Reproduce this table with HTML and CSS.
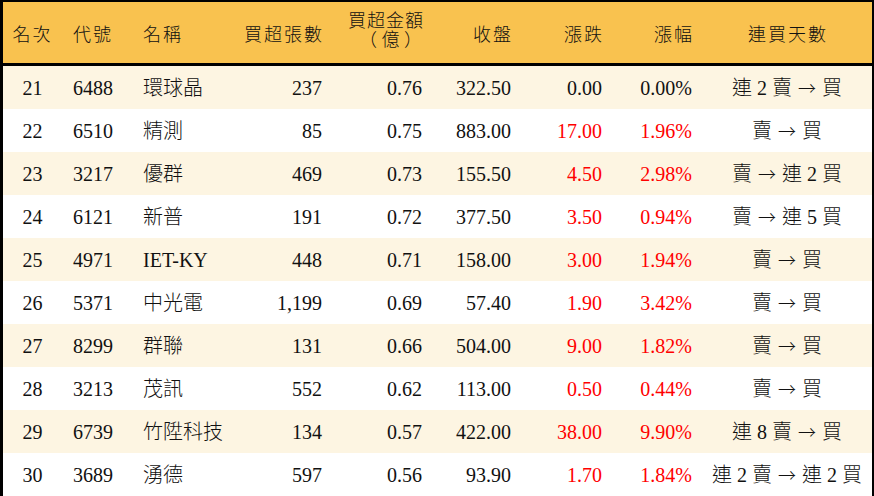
FILE: index.html
```html
<!DOCTYPE html>
<html lang="zh-Hant">
<head>
<meta charset="utf-8">
<link rel="stylesheet" href="styles.css">
</head>
<body>
<table class="board">
  <colgroup>
    <col class="c1"><col class="c2"><col class="c3"><col class="c4"><col class="c5"><col class="c6"><col class="c7"><col class="c8"><col class="c9">
  </colgroup>
  <thead>
    <tr>
      <th class="ctr">名次</th>
      <th class="lft">代號</th>
      <th class="lft">名稱</th>
      <th class="rgt">買超張數</th>
      <th class="rgt two">買超金額<br><span class="paren">（&nbsp;億&nbsp;）</span></th>
      <th class="rgt">收盤</th>
      <th class="rgt">漲跌</th>
      <th class="rgt">漲幅</th>
      <th class="ctr">連買天數</th>
    </tr>
  </thead>
  <tbody>
    <tr><td class="ctr">21</td><td class="lft">6488</td><td class="lft">環球晶</td><td class="rgt">237</td><td class="rgt">0.76</td><td class="rgt">322.50</td><td class="rgt">0.00</td><td class="rgt">0.00%</td><td class="ctr days">連 2 賣 <span class="arrow">→</span> 買</td></tr>
    <tr><td class="ctr">22</td><td class="lft">6510</td><td class="lft">精測</td><td class="rgt">85</td><td class="rgt">0.75</td><td class="rgt">883.00</td><td class="rgt up">17.00</td><td class="rgt up">1.96%</td><td class="ctr days">賣 <span class="arrow">→</span> 買</td></tr>
    <tr><td class="ctr">23</td><td class="lft">3217</td><td class="lft">優群</td><td class="rgt">469</td><td class="rgt">0.73</td><td class="rgt">155.50</td><td class="rgt up">4.50</td><td class="rgt up">2.98%</td><td class="ctr days">賣 <span class="arrow">→</span> 連 2 買</td></tr>
    <tr><td class="ctr">24</td><td class="lft">6121</td><td class="lft">新普</td><td class="rgt">191</td><td class="rgt">0.72</td><td class="rgt">377.50</td><td class="rgt up">3.50</td><td class="rgt up">0.94%</td><td class="ctr days">賣 <span class="arrow">→</span> 連 5 買</td></tr>
    <tr><td class="ctr">25</td><td class="lft">4971</td><td class="lft">IET-KY</td><td class="rgt">448</td><td class="rgt">0.71</td><td class="rgt">158.00</td><td class="rgt up">3.00</td><td class="rgt up">1.94%</td><td class="ctr days">賣 <span class="arrow">→</span> 買</td></tr>
    <tr><td class="ctr">26</td><td class="lft">5371</td><td class="lft">中光電</td><td class="rgt">1,199</td><td class="rgt">0.69</td><td class="rgt">57.40</td><td class="rgt up">1.90</td><td class="rgt up">3.42%</td><td class="ctr days">賣 <span class="arrow">→</span> 買</td></tr>
    <tr><td class="ctr">27</td><td class="lft">8299</td><td class="lft">群聯</td><td class="rgt">131</td><td class="rgt">0.66</td><td class="rgt">504.00</td><td class="rgt up">9.00</td><td class="rgt up">1.82%</td><td class="ctr days">賣 <span class="arrow">→</span> 買</td></tr>
    <tr><td class="ctr">28</td><td class="lft">3213</td><td class="lft">茂訊</td><td class="rgt">552</td><td class="rgt">0.62</td><td class="rgt">113.00</td><td class="rgt up">0.50</td><td class="rgt up">0.44%</td><td class="ctr days">賣 <span class="arrow">→</span> 買</td></tr>
    <tr><td class="ctr">29</td><td class="lft">6739</td><td class="lft">竹陞科技</td><td class="rgt">134</td><td class="rgt">0.57</td><td class="rgt">422.00</td><td class="rgt up">38.00</td><td class="rgt up">9.90%</td><td class="ctr days">連 8 賣 <span class="arrow">→</span> 買</td></tr>
    <tr><td class="ctr">30</td><td class="lft">3689</td><td class="lft">湧德</td><td class="rgt">597</td><td class="rgt">0.56</td><td class="rgt">93.90</td><td class="rgt up">1.70</td><td class="rgt up">1.84%</td><td class="ctr days">連 2 賣 <span class="arrow">→</span> 連 2 買</td></tr>
  </tbody>
</table>
</body>
</html>
```

FILE: styles.css
```css
html, body {
  margin: 0;
  padding: 0;
  background: #ffffff;
}

.board {
  width: 874px;
  box-sizing: border-box;
  border-collapse: separate;
  border-spacing: 0;
  table-layout: fixed;
  border-style: solid;
  border-color: #000;
  border-width: 2px 2px 4px 3px;
  font-family: "Liberation Serif", "Noto Sans CJK TC", serif;
  font-weight: 300;
  font-size: 20px;
  color: #111;
}

.c1 { width: 59px; }
.c2 { width: 71px; }
.c3 { width: 97px; }
.c4 { width: 102px; }
.c5 { width: 100px; }
.c6 { width: 89px; }
.c7 { width: 91px; }
.c8 { width: 90px; }
.c9 { width: 170px; }

th, td {
  padding: 0;
  white-space: nowrap;
  vertical-align: middle;
}

thead th {
  background: #f9c24f;
  height: 57px;
  font-weight: 300;
  font-size: 18px;
  border-bottom: 3px solid #000;
  letter-spacing: 2px;
}

thead th.two {
  line-height: 19px;
  padding-bottom: 4px;
  padding-right: 10px;
  letter-spacing: 1px;
}

.paren {
  letter-spacing: 0;
  padding-right: 2px;
}

tbody td {
  height: 43px;
  line-height: 22px;
}

tbody tr:nth-child(odd) td {
  background: #fdf5e2;
}

tbody tr:nth-child(even) td {
  background: #ffffff;
}

.ctr { text-align: center; }
.lft { text-align: left; padding-left: 10px; }
.rgt { text-align: right; padding-right: 10px; }

thead th.rgt { padding-right: 8px; }
tbody td.lft:nth-child(2) { padding-left: 11px; }
thead th.lft:nth-child(2) { padding-left: 11px; }
thead th.ctr:last-child { padding-left: 2px; }

.days {
  word-spacing: 0;
}

.arrow {
  font-family: "Noto Sans CJK JP", sans-serif;
  font-weight: 300;
  font-size: 18px;
  display: inline-block;
  margin: 0 1px;
}

.up { color: #ff0000; }
```
